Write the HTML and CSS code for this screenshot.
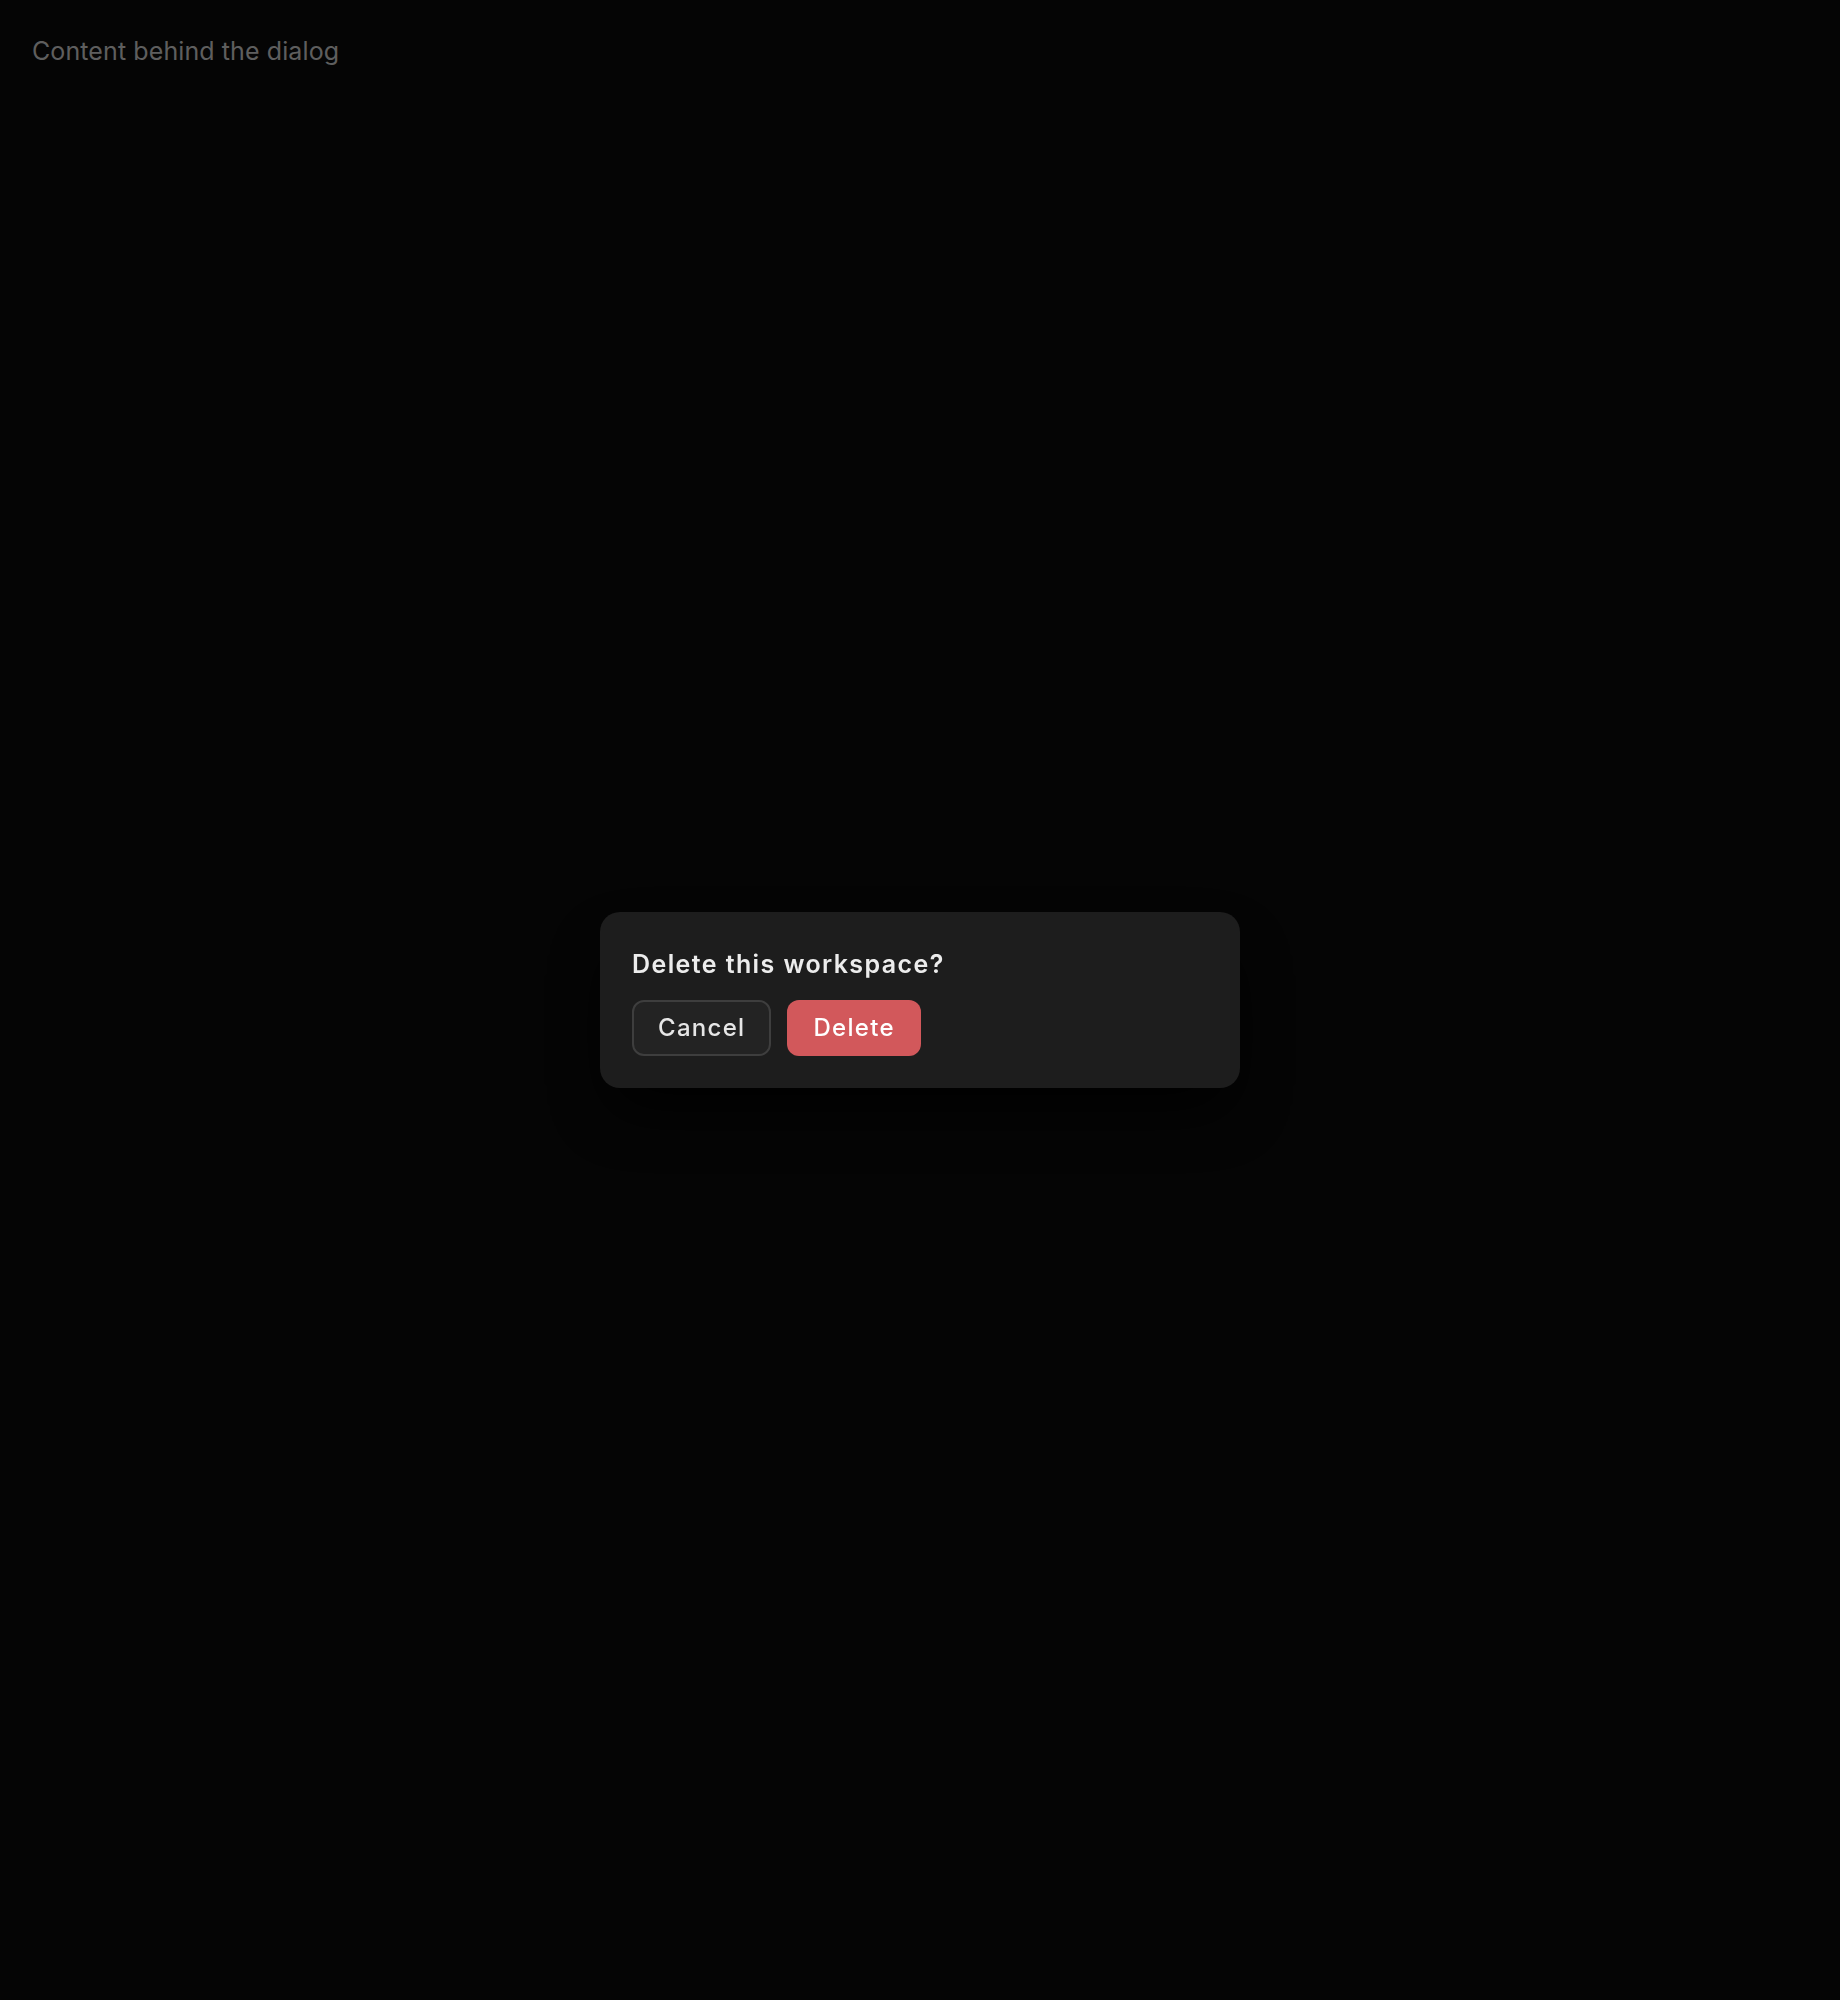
FILE: index.html
```html
<!DOCTYPE html>
<html lang="en">
<head>
<meta charset="utf-8">
<title>Dialog</title>
<link rel="stylesheet" href="styles.css">
</head>
<body>
<main class="page">
  <p class="behind">Content behind the dialog</p>
</main>
<div class="overlay">
  <div class="dialog" role="dialog" aria-labelledby="dlg-title">
    <h2 id="dlg-title" class="dialog-title">Delete this workspace?</h2>
    <div class="actions">
      <button class="btn btn-cancel">Cancel</button>
      <button class="btn btn-delete">Delete</button>
    </div>
  </div>
</div>
</body>
</html>
```
FILE: styles.css
```css
html, body {
  margin: 0;
  padding: 0;
  height: 100%;
}
body {
  background: #0a0a0a;
  font-family: Inter, "Noto Sans", sans-serif;
  color: #ececec;
}
.page {
  padding: 32px;
}
.behind {
  margin: 0;
  font-size: 25px;
  line-height: 38px;
  color: #bdbdbd;
  letter-spacing: 0.1px;
}
.overlay {
  position: fixed;
  inset: 0;
  background: rgba(0, 0, 0, 0.5);
  display: flex;
  align-items: center;
  justify-content: center;
}
.dialog {
  width: 640px;
  box-sizing: border-box;
  padding: 32px;
  background: #1d1d1d;
  border-radius: 20px;
  box-shadow: 0 30px 60px -10px rgba(0, 0, 0, 0.9);
}
.dialog-title {
  margin: 0 0 18px;
  padding-top: 2px;
  font-size: 25px;
  line-height: 36px;
  font-weight: 600;
  letter-spacing: 1.4px;
  color: #ececec;
}
.actions {
  display: flex;
  gap: 16px;
}
.btn {
  font-family: inherit;
  font-size: 24px;
  line-height: 32px;
  font-weight: 500;
  letter-spacing: 1.3px;
  height: 56px;
  padding: 0 24px;
  border-radius: 12px;
  border: 2px solid transparent;
  cursor: pointer;
}
.btn-cancel {
  background: #232323;
  border-color: #3e3e3e;
  color: #e6e6e6;
}
.btn-delete {
  background: #d2585b;
  color: #ffffff;
}
```
